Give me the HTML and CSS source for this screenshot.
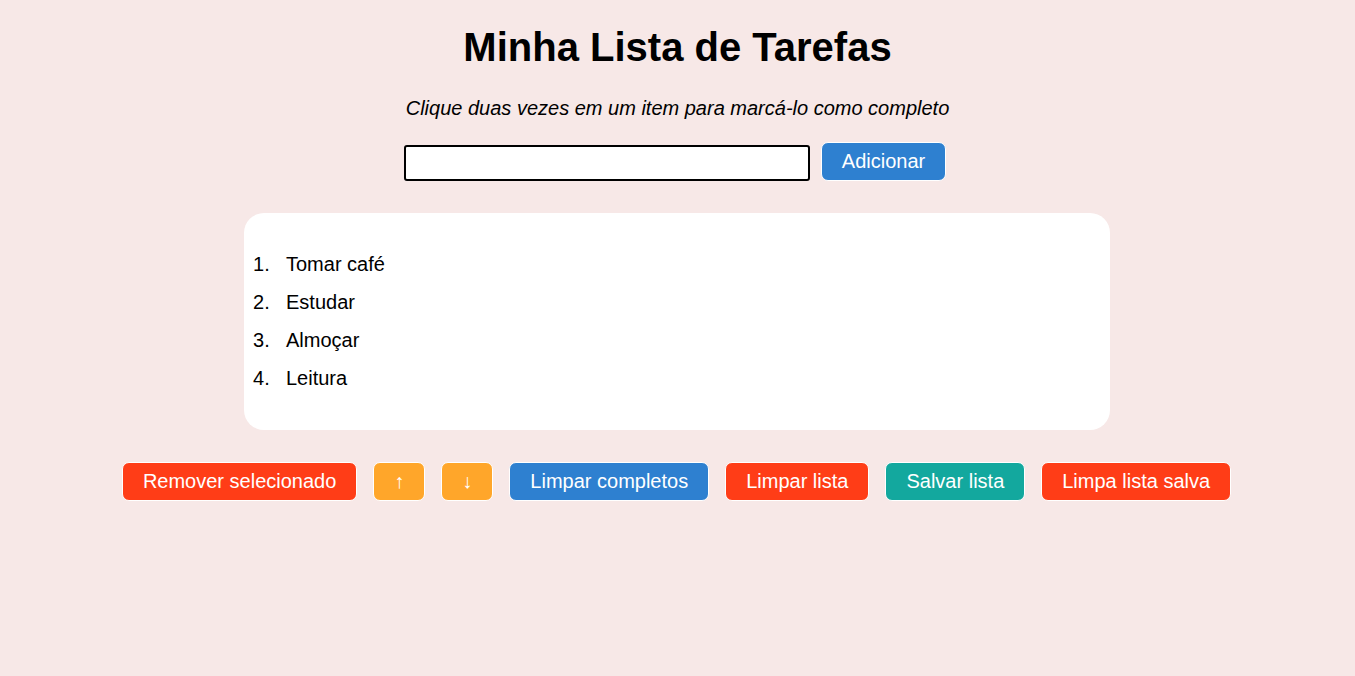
FILE: index.html
```html
<!DOCTYPE html>
<html lang="pt-BR">
<head>
<meta charset="utf-8">
<title>Minha Lista de Tarefas</title>
<link rel="stylesheet" href="styles.css">
</head>
<body>
<main class="app">
  <h1 class="title">Minha Lista de Tarefas</h1>
  <p class="hint">Clique duas vezes em um item para marcá-lo como completo</p>
  <div class="add-row">
    <input class="task-input" type="text" aria-label="Nova tarefa">
    <button class="btn btn-blue">Adicionar</button>
  </div>
  <section class="list-box">
    <ol class="task-list">
      <li>Tomar café</li>
      <li>Estudar</li>
      <li>Almoçar</li>
      <li>Leitura</li>
    </ol>
  </section>
  <div class="actions">
    <button class="btn btn-red">Remover selecionado</button>
    <button class="btn btn-orange">↑</button>
    <button class="btn btn-orange">↓</button>
    <button class="btn btn-blue">Limpar completos</button>
    <button class="btn btn-red">Limpar lista</button>
    <button class="btn btn-teal">Salvar lista</button>
    <button class="btn btn-red">Limpa lista salva</button>
  </div>
</main>
</body>
</html>
```

FILE: styles.css
```css
html, body {
  margin: 0;
  padding: 0;
  background: #f7e8e7;
}
body {
  font-family: "Liberation Sans", Arial, sans-serif;
  color: #000;
}
.app {
  display: flex;
  flex-direction: column;
  align-items: center;
  padding-top: 24px;
}
.title {
  margin: 0;
  font-size: 40px;
  line-height: 46px;
  font-weight: bold;
}
.hint {
  margin: 27px 0 0;
  font-size: 20px;
  line-height: 23px;
  font-style: italic;
}
.add-row {
  display: flex;
  align-items: flex-end;
  gap: 11px;
  margin-top: 22px;
  margin-right: 5px;
}
.task-input {
  box-sizing: border-box;
  width: 406px;
  height: 36px;
  border: 2px solid #000;
  border-radius: 3px;
  background: #fff;
  font-family: inherit;
  font-size: 18px;
  padding: 0 6px;
  margin: 0;
}
.btn {
  box-sizing: border-box;
  height: 39px;
  font-family: "Liberation Sans", Arial, sans-serif;
  font-size: 20px;
  line-height: 23px;
  padding: 7px 20px;
  border: 1px solid #fff;
  border-radius: 7px;
  color: #fff;
  margin: 0;
  cursor: pointer;
}
.btn-blue { background: #2e80d0; }
.btn-red { background: #ff3d17; }
.btn-orange { background: #ffa62a; }
.btn-teal { background: #13a89e; }
.list-box {
  box-sizing: border-box;
  width: 866px;
  margin-top: 32px;
  margin-right: 1px;
  padding: 32px 9px 33px;
  background: #fff;
  border-radius: 20px;
}
.task-list {
  list-style: none;
  margin: 0;
  padding: 0;
  counter-reset: item;
}
.task-list li {
  counter-increment: item;
  font-size: 20px;
  line-height: 23px;
  padding: 7.5px 0;
}
.task-list li::before {
  content: counter(item) ".";
  display: inline-block;
  width: 33px;
}
.actions {
  display: flex;
  justify-content: center;
  gap: 16px;
  margin-top: 32px;
  margin-right: 2px;
}
```
